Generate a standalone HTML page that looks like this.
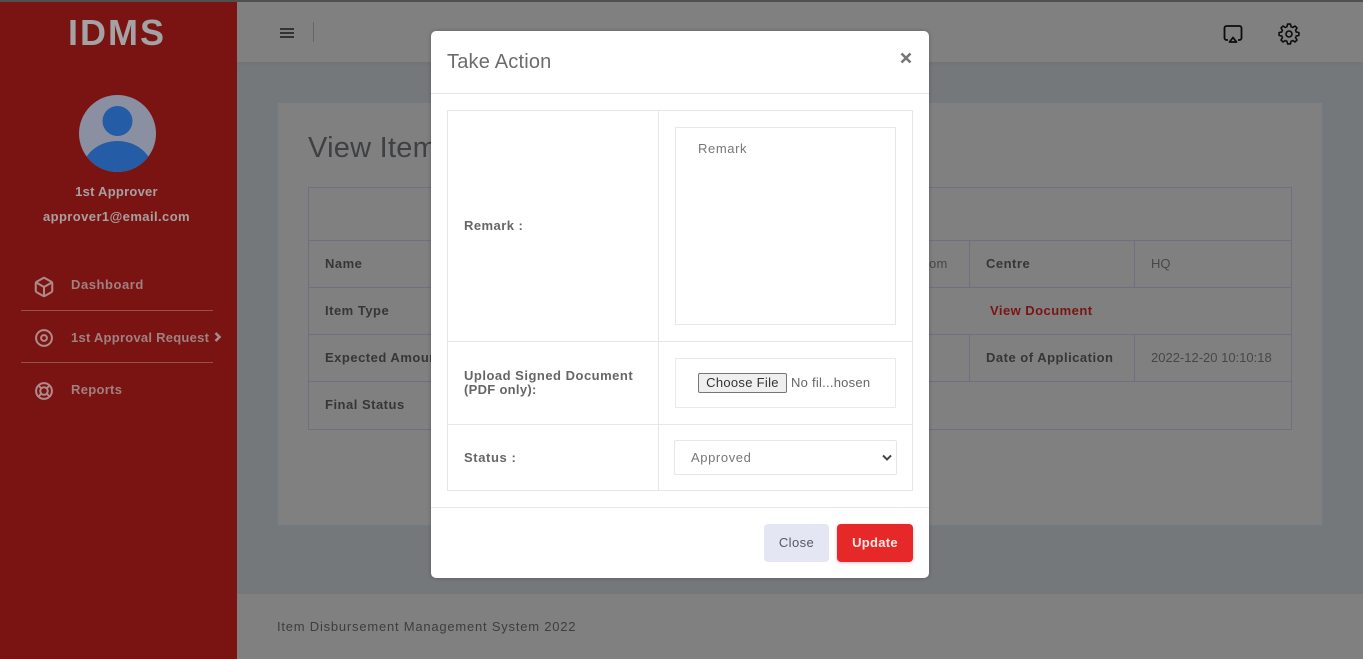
<!DOCTYPE html>
<html><head><meta charset="utf-8"><style>
html,body{margin:0;padding:0;width:1363px;height:659px;overflow:hidden;background:#75787b;font-family:"Liberation Sans",sans-serif;}
.a{position:absolute;white-space:nowrap;line-height:1;}
.b{position:absolute;box-sizing:border-box;}
.l{position:absolute;background:#6e7080;}
.m{position:absolute;background:#e6e7ea;}
.k{font-size:13px;font-weight:700;color:#353638;letter-spacing:.5px;}
.v{font-size:13px;color:#46474a;}
.s{font-size:13px;font-weight:700;color:#a08080;}
.t{font-size:13px;font-weight:700;color:#666;letter-spacing:.45px;}
</style></head><body>
<div class="b" style="left:0;top:0;width:1363px;height:2px;background:#505050;z-index:5"></div>
<div class="b" style="left:237px;top:2px;width:1126px;height:60px;background:#808080;box-shadow:0 1px 6px rgba(0,0,0,.06)"></div>
<div class="b" style="left:0;top:2px;width:237px;height:657px;background:#7a1413"></div>
<div class="a" style="left:68px;top:15px;font-size:36px;font-weight:700;color:#a3a3a3;letter-spacing:2px">IDMS</div>
<svg class="b" style="left:79px;top:95px" width="77" height="77" viewBox="0 0 77 77"><defs><clipPath id="c"><circle cx="38.5" cy="38.5" r="38.5"/></clipPath></defs><circle cx="38.5" cy="38.5" r="38.5" fill="#8a90a2"/><g clip-path="url(#c)"><circle cx="38.5" cy="26" r="15" fill="#245ca6"/><ellipse cx="38.5" cy="78" rx="36" ry="32" fill="#245ca6"/></g></svg>
<div class="a s" style="left:0;width:233px;text-align:center;top:185px;color:#a8a0a0;letter-spacing:.25px">1st Approver</div>
<div class="a s" style="left:0;width:233px;text-align:center;top:210px;color:#a8a0a0;letter-spacing:.42px">approver1@email.com</div>
<svg class="b" style="left:33px;top:276px" width="22" height="22" viewBox="0 0 24 24" fill="none" stroke="#b08a8a" stroke-width="2.200" stroke-linejoin="round"><path d="M21 16V8a2 2 0 0 0-1-1.730l-7-4a2 2 0 0 0-2 0l-7 4A2 2 0 0 0 3 8v8a2 2 0 0 0 1 1.730l7 4a2 2 0 0 0 2 0l7-4A2 2 0 0 0 21 16z"/><path d="M3.270 6.960L12 12.010l8.730-5.050M12 22.080V12"/></svg>
<div class="a s" style="left:71px;top:278px;letter-spacing:.55px">Dashboard</div>
<div class="b" style="left:21px;top:310px;width:192px;height:1px;background:#975050"></div>
<svg class="b" style="left:34px;top:328px" width="20" height="20" viewBox="0 0 24 24" fill="none" stroke="#b08a8a" stroke-width="2.400"><circle cx="12" cy="12" r="9.500"/><circle cx="12" cy="12" r="3.500"/></svg>
<div class="a s" style="left:71px;top:331px;letter-spacing:.25px">1st Approval Request</div>
<svg class="b" style="left:214px;top:332px" width="8" height="10" viewBox="0 0 8 10" fill="none" stroke="#a88a8a" stroke-width="2.600"><path d="M1.500 1l4 4-4 4"/></svg>
<div class="b" style="left:21px;top:362px;width:192px;height:1px;background:#975050"></div>
<svg class="b" style="left:34px;top:381px" width="20" height="20" viewBox="0 0 24 24" fill="none" stroke="#b08a8a" stroke-width="2.400"><circle cx="12" cy="12" r="9.500"/><circle cx="12" cy="12" r="4.500"/><path d="M5.500 5.500l3.400 3.400M15.100 15.100l3.400 3.400M18.500 5.500l-3.400 3.400M8.900 15.100l-3.400 3.400"/></svg>
<div class="a s" style="left:71px;top:383px;letter-spacing:.3px">Reports</div>

<svg class="b" style="left:280px;top:27px" width="14" height="12" viewBox="0 0 14 12" fill="none" stroke="#333" stroke-width="2"><path d="M0 2h14M0 6h14M0 10h14"/></svg>
<div class="b" style="left:313px;top:22px;width:1px;height:20px;background:#666"></div>
<svg class="b" style="left:1222px;top:23px" width="22" height="22" viewBox="0 0 22 22" fill="none" stroke="#0c0c0c" stroke-width="1.800" stroke-linejoin="round"><path d="M6 17H4.500a2 2 0 0 1-2-2V5a2 2 0 0 1 2-2h13a2 2 0 0 1 2 2v10a2 2 0 0 1-2 2H16"/><path d="M11 14.500l3.500 4.500h-7z"/></svg>
<svg class="b" style="left:1278px;top:23px" width="22" height="22" viewBox="-11 -11 22 22" fill="none" stroke="#0c0c0c" stroke-width="1.600" stroke-linejoin="round"><circle r="3"/><path d="M-2.870-6.930L-2.070-7.210-1.390-9.900H1.390L2.070-7.210 2.870-6.930"/><path transform="rotate(45)" d="M-2.870-6.930L-2.070-7.210-1.390-9.900H1.390L2.070-7.210 2.870-6.930"/><path transform="rotate(90)" d="M-2.870-6.930L-2.070-7.210-1.390-9.900H1.390L2.070-7.210 2.870-6.930"/><path transform="rotate(135)" d="M-2.870-6.930L-2.070-7.210-1.390-9.900H1.390L2.070-7.210 2.870-6.930"/><path transform="rotate(180)" d="M-2.870-6.930L-2.070-7.210-1.390-9.900H1.390L2.070-7.210 2.870-6.930"/><path transform="rotate(225)" d="M-2.870-6.930L-2.070-7.210-1.390-9.900H1.390L2.070-7.210 2.870-6.930"/><path transform="rotate(270)" d="M-2.870-6.930L-2.070-7.210-1.390-9.900H1.390L2.070-7.210 2.870-6.930"/><path transform="rotate(315)" d="M-2.870-6.930L-2.070-7.210-1.390-9.900H1.390L2.070-7.210 2.870-6.930"/></svg>

<div class="b" style="left:277px;top:102px;width:1046px;height:424px;background:#808080;border:1px solid #6f7a88"></div>
<div class="a" style="left:308px;top:134px;font-size:29px;color:#3e4044;letter-spacing:.25px">View Item</div>
<div class="b" style="left:308px;top:187px;width:984px;height:243px;border:1px solid #6e7080"></div>
<div class="l" style="left:308px;top:240px;width:984px;height:1px"></div>
<div class="l" style="left:308px;top:287px;width:984px;height:1px"></div>
<div class="l" style="left:308px;top:334px;width:984px;height:1px"></div>
<div class="l" style="left:308px;top:381px;width:984px;height:1px"></div>
<div class="l" style="left:969px;top:240px;width:1px;height:47px"></div>
<div class="l" style="left:1134px;top:240px;width:1px;height:47px"></div>
<div class="l" style="left:969px;top:334px;width:1px;height:47px"></div>
<div class="l" style="left:1134px;top:334px;width:1px;height:47px"></div>
<div class="a k" style="left:325px;top:257px">Name</div>
<div class="a k" style="left:325px;top:304px">Item Type</div>
<div class="a k" style="left:325px;top:351px">Expected Amount</div>
<div class="a k" style="left:325px;top:398px">Final Status</div>
<div class="a v" style="left:929px;top:257px;letter-spacing:.3px">om</div>
<div class="a k" style="left:986px;top:257px">Centre</div>
<div class="a v" style="left:1151px;top:257px">HQ</div>
<div class="a" style="left:990px;top:304px;font-size:13px;font-weight:700;color:#7a1413;letter-spacing:.46px">View Document</div>
<div class="a k" style="left:986px;top:351px">Date of Application</div>
<div class="a v" style="left:1151px;top:351px">2022-12-20 10:10:18</div>

<div class="b" style="left:237px;top:594px;width:1126px;height:65px;background:#808080"></div>
<div class="a" style="left:277px;top:620px;font-size:13px;color:#3c3d40;letter-spacing:.78px">Item Disbursement Management System 2022</div>

<div class="b" style="left:431px;top:31px;width:498px;height:547px;background:#fff;border-radius:5px;box-shadow:0 0 4px rgba(0,0,0,.25)"></div>
<div class="a" style="left:447px;top:52px;font-size:20px;color:#6c6c6c;letter-spacing:.2px">Take Action</div>
<svg class="b" style="left:900px;top:52px" width="12" height="12" viewBox="0 0 12 12" fill="none" stroke="#777" stroke-width="2.600"><path d="M1.500 1.500l9 9M10.500 1.500l-9 9"/></svg>
<div class="m" style="left:431px;top:93px;width:498px;height:1px"></div>
<div class="m" style="left:431px;top:507px;width:498px;height:1px"></div>
<div class="b" style="left:447px;top:110px;width:466px;height:381px;border:1px solid #e6e7ea"></div>
<div class="m" style="left:658px;top:110px;width:1px;height:381px"></div>
<div class="m" style="left:447px;top:341px;width:466px;height:1px"></div>
<div class="m" style="left:447px;top:424px;width:466px;height:1px"></div>
<div class="a t" style="left:464px;top:219px">Remark :</div>
<div class="a t" style="left:464px;top:369px;letter-spacing:.5px">Upload Signed Document</div>
<div class="a t" style="left:464px;top:383px;letter-spacing:.3px">(PDF only):</div>
<div class="a t" style="left:464px;top:451px;letter-spacing:.6px">Status :</div>
<div class="b" style="left:675px;top:127px;width:221px;height:198px;border:1px solid #e6e7ea"></div>
<div class="a" style="left:698px;top:142px;font-size:13px;color:#777;letter-spacing:.6px">Remark</div>
<div class="b" style="left:675px;top:358px;width:221px;height:50px;border:1px solid #e9eaec"></div>
<div class="b" style="left:698px;top:373px;width:89px;height:20px;background:#efefef;border:1px solid #767676;border-radius:2px;font-size:13px;line-height:18px;text-align:center;color:#333;letter-spacing:.3px">Choose File</div>
<div class="a" style="left:791px;top:376px;font-size:13px;color:#666;letter-spacing:.25px">No fil...hosen</div>
<div class="b" style="left:674px;top:440px;width:223px;height:35px;border:1px solid #e6e7ea;border-radius:2px"></div>
<div class="a" style="left:691px;top:451px;font-size:13px;color:#777;letter-spacing:.6px">Approved</div>
<svg class="b" style="left:882px;top:454px" width="10" height="8" viewBox="0 0 10 8" fill="none" stroke="#444" stroke-width="2"><path d="M1 1.500l4 4 4-4"/></svg>
<div class="b" style="left:764px;top:524px;width:65px;height:38px;background:#e4e6f3;border-radius:4px;font-size:13px;line-height:38px;text-align:center;color:#555a66;letter-spacing:.4px">Close</div>
<div class="b" style="left:837px;top:524px;width:76px;height:38px;background:#e72828;border-radius:4px;font-size:13px;font-weight:700;line-height:38px;text-align:center;color:#fbe9e9;letter-spacing:.3px;box-shadow:0 1px 3px rgba(231,40,100,.3)">Update</div>
</body></html>
